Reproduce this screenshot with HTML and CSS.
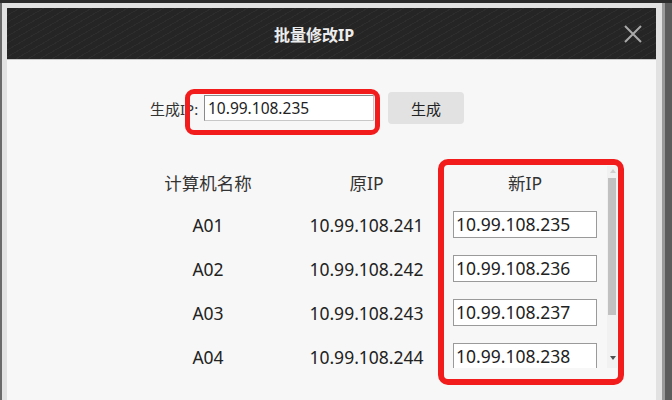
FILE: index.html
```html
<!DOCTYPE html>
<html lang="zh-CN">
<head>
    <meta charset="UTF-8">
    <meta name="viewport" content="width=device-width, initial-scale=1.0">
    <title>批量修改IP</title>
    <link rel="stylesheet" href="styles.css">
</head>
<body>
    <div class="frame">
        <div class="dialog">
            <div class="title-bar">
                <h3 class="title">批量修改IP</h3>
                <svg class="close" width="18" height="18" viewBox="0 0 18 18">
                    <path d="M1 1 L17 17 M17 1 L1 17" stroke="#a9a9a9" stroke-width="2" fill="none"/>
                </svg>
            </div>

            <div class="content">
                <div class="gen-row">
                    <label class="gen-label" for="genIp">生成IP:</label>
                    <input type="text" id="genIp" class="gen-input" value="10.99.108.235" />
                    <button class="button">生成</button>
                </div>

                <div class="list-wrap">
                    <div class="list">
                        <div class="row head">
                            <span>计算机名称</span>
                            <span>原IP</span>
                            <span>新IP</span>
                        </div>
                        <div class="row">
                            <span>A01</span>
                            <span>10.99.108.241</span>
                            <span><input type="text" class="ip-input" value="10.99.108.235" /></span>
                        </div>
                        <div class="row">
                            <span>A02</span>
                            <span>10.99.108.242</span>
                            <span><input type="text" class="ip-input" value="10.99.108.236" /></span>
                        </div>
                        <div class="row">
                            <span>A03</span>
                            <span>10.99.108.243</span>
                            <span><input type="text" class="ip-input" value="10.99.108.237" /></span>
                        </div>
                        <div class="row">
                            <span>A04</span>
                            <span>10.99.108.244</span>
                            <span><input type="text" class="ip-input" value="10.99.108.238" /></span>
                        </div>
                    </div>

                    <!-- scrollbar -->
                    <div class="scrollbar">
                        <div class="arrow up"></div>
                        <div class="thumb"></div>
                        <div class="arrow down"></div>
                    </div>
                </div>
            </div>

            <!-- red marks drawn over the screenshot -->
            <div class="mark mark-gen"></div>
            <div class="mark mark-new"></div>
        </div>
    </div>
</body>
</html>
```

FILE: styles.css
```css
* {
    margin: 0;
    padding: 0;
    box-sizing: border-box;
}

body {
    font-family: 'Noto Sans', 'Noto Sans CJK SC', sans-serif;
    width: 672px;
    height: 400px;
    overflow: hidden;
    background: linear-gradient(#2c2c2c 0 3px, #5c5c5c 3px);
    color: #222;
}

.frame {
    width: 665px;
    height: 397px;
    margin-top: 3px;
    padding: 5px 6px 0 5px;
    background-color: #e2e2e2;
    border-left: 2px solid #6a6a6a;
    border-right: 3px solid #9a9a9a;
}

.dialog {
    position: relative;
    height: 100%;
    background-color: #f7f7f7;
}

.title-bar {
    height: 52px;
    display: flex;
    align-items: center;
    justify-content: center;
    background-color: #252525;
    background-image: repeating-linear-gradient(150deg, rgba(255,255,255,0.035) 0 1px, transparent 1px 6px);
    border-bottom: 1px solid #c8c8c8;
}

.title {
    font-size: 16px;
    font-weight: bold;
    color: #ececec;
    margin-left: -35px;
}

.close {
    position: absolute;
    left: 617px;
    top: 17px;
}

.gen-row {
    display: flex;
    align-items: center;
    margin-top: 32px;
    padding-left: 143px;
}

.gen-label {
    font-size: 15px;
    color: #333;
    width: 54px;
}

.gen-input {
    width: 170px;
    height: 26px;
    font-family: inherit;
    font-size: 15.5px;
    padding: 0 3px;
    color: #222;
    background: #fff;
    border: 1px solid #8a8a8a;
    border-bottom-color: #c8c8c8;
    border-right-color: #c8c8c8;
}

.button {
    width: 76px;
    height: 32px;
    margin-left: 14px;
    font-family: inherit;
    font-size: 15px;
    color: #222;
    background-color: #e2e2e2;
    border: none;
    border-radius: 4px;
}

.list-wrap {
    display: flex;
    gap: 3px;
    margin-top: 42px;
    padding-left: 122px;
}

.list {
    width: 475px;
    height: 202px;
    overflow: hidden;
}

.row {
    display: grid;
    grid-template-columns: 158px 159px 158px;
    align-items: center;
    height: 44px;
    font-size: 17.5px;
    color: #222;
}

.row span {
    text-align: center;
}

.row.head {
    height: 32px;
    margin-bottom: 5px;
    color: #333;
}

.ip-input {
    width: 144px;
    height: 27px;
    margin-top: -3px;
    font-family: inherit;
    font-size: 17.5px;
    padding: 0 2px;
    color: #222;
    background: #fff;
    border: 1px solid #9a9a9a;
}

.scrollbar {
    position: relative;
    width: 10px;
    height: 202px;
    background-color: #f1f1f1;
}

.thumb {
    position: absolute;
    left: 1px;
    top: 12px;
    width: 8px;
    height: 137px;
    background-color: #c1c1c1;
}

.arrow {
    position: absolute;
    left: 3px;
    width: 0;
    height: 0;
    border-left: 3px solid transparent;
    border-right: 3px solid transparent;
}

.arrow.up {
    top: 3px;
    border-bottom: 4px solid #cfcfcf;
}

.arrow.down {
    top: 190px;
    border-top: 4px solid #505050;
}

.mark {
    position: absolute;
    border: 5px solid #f31c1c;
    border-radius: 9px;
}

.mark-gen {
    left: 178px;
    top: 81px;
    width: 195px;
    height: 46px;
}

.mark-new {
    left: 431px;
    top: 151px;
    width: 186px;
    height: 226px;
    border-width: 6px;
    border-radius: 10px;
}
```
